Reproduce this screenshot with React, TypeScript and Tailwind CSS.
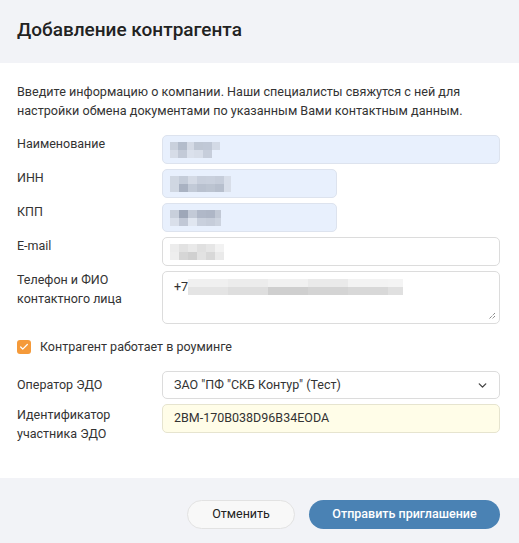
import { ChevronDown, Check } from "lucide-react";

const Blur = ({ blocks }: { blocks: { w: number; c: string }[][] }) => (
  <div className="flex flex-col blur-[0.6px]">
    {blocks.map((row, i) => (
      <div key={i} className="flex h-[8px]">
        {row.map((b, j) => (
          <div key={j} style={{ width: b.w, backgroundColor: b.c }} />
        ))}
      </div>
    ))}
  </div>
);

const Row = ({ label, children }: { label: React.ReactNode; children: React.ReactNode }) => (
  <div className="flex mb-[5px]">
    <div className="w-[145px] shrink-0 -mt-[1px] text-[12.5px] leading-[19px] text-[#333]">{label}</div>
    <div className="flex-1">{children}</div>
  </div>
);

const App = () => {
  return (
    <div
      className="w-[519px] h-[543px] flex flex-col bg-white text-[#333]"
      style={{ fontFamily: 'Roboto, "Noto Sans", sans-serif' }}
    >
      <div className="h-[63px] shrink-0 bg-[#f2f3f7] px-[17px] flex items-center">
        <h1 className="text-[19px] font-medium text-[#222] -mt-[2px]">Добавление контрагента</h1>
      </div>

      <div className="flex-1 pl-[17px] pr-[19px] pt-[19px]">
        <p className="text-[12.6px] leading-[19px] text-[#333] mb-[15px]">
          Введите информацию о компании. Наши специалисты свяжутся с ней для настройки обмена
          документами по указанным Вами контактным данным.
        </p>

        <Row label="Наименование">
          <div className="h-[29px] rounded-[5px] border border-[#dde3ee] bg-[#e8f0fd] px-[7px] flex items-center">
            <Blur
              blocks={[
                [
                  { w: 8, c: "#c9d0dc" },
                  { w: 9, c: "#b3bccb" },
                  { w: 7, c: "#d4dae5" },
                  { w: 9, c: "#bfc7d4" },
                  { w: 9, c: "#c0c8d6" },
                  { w: 8, c: "#d3dae6" },
                ],
                [
                  { w: 8, c: "#d6dce7" },
                  { w: 9, c: "#c3cad7" },
                  { w: 7, c: "#dbe1ec" },
                  { w: 9, c: "#d8dee9" },
                  { w: 9, c: "#c7cedb" },
                ],
              ]}
            />
          </div>
        </Row>

        <Row label="ИНН">
          <div className="w-[175px] h-[29px] rounded-[5px] border border-[#dde3ee] bg-[#e8f0fd] px-[7px] flex items-center">
            <Blur
              blocks={[
                [
                  { w: 9, c: "#d0d7e2" },
                  { w: 9, c: "#c4ccd9" },
                  { w: 9, c: "#d4dae5" },
                  { w: 9, c: "#c8cfdc" },
                  { w: 9, c: "#c9d0dd" },
                  { w: 9, c: "#c6cdda" },
                  { w: 7, c: "#d8dee9" },
                ],
                [
                  { w: 9, c: "#d0d7e2" },
                  { w: 9, c: "#a9b2c2" },
                  { w: 9, c: "#c2cad7" },
                  { w: 9, c: "#b9c1cf" },
                  { w: 9, c: "#bcc4d1" },
                  { w: 9, c: "#b7bfcd" },
                  { w: 7, c: "#d8dee9" },
                ],
              ]}
            />
          </div>
        </Row>

        <Row label="КПП">
          <div className="w-[175px] h-[29px] rounded-[5px] border border-[#dde3ee] bg-[#e8f0fd] px-[7px] flex items-center">
            <Blur
              blocks={[
                [
                  { w: 9, c: "#c8cfdb" },
                  { w: 9, c: "#9ea7b8" },
                  { w: 9, c: "#c3cad7" },
                  { w: 9, c: "#b0b8c8" },
                  { w: 9, c: "#aeb6c6" },
                  { w: 6, c: "#c1c8d5" },
                ],
                [
                  { w: 9, c: "#d9dfea" },
                  { w: 9, c: "#c1c8d6" },
                  { w: 9, c: "#e0e6f0" },
                  { w: 9, c: "#c9d0dd" },
                  { w: 9, c: "#c6cdda" },
                  { w: 6, c: "#ccd3df" },
                ],
              ]}
            />
          </div>
        </Row>

        <Row label="E-mail">
          <div className="h-[29px] rounded-[5px] border border-[#dcdcdc] bg-white px-[7px] flex items-center">
            <Blur
              blocks={[
                [
                  { w: 9, c: "#ececec" },
                  { w: 9, c: "#e2e2e2" },
                  { w: 9, c: "#e9e9e9" },
                  { w: 9, c: "#e0e0e0" },
                  { w: 9, c: "#e6e6e6" },
                  { w: 9, c: "#f2f2f2" },
                ],
                [
                  { w: 9, c: "#eeeeee" },
                  { w: 9, c: "#d6d6d6" },
                  { w: 9, c: "#d0d0d0" },
                  { w: 9, c: "#e2e2e2" },
                  { w: 9, c: "#d8d8d8" },
                  { w: 9, c: "#eaeaea" },
                ],
              ]}
            />
          </div>
        </Row>

        <Row label={<>Телефон и ФИО<br />контактного лица</>}>
          <div className="relative h-[53px] rounded-[5px] border border-[#dcdcdc] bg-white px-[11px] pt-[4px] flex items-start">
            <span className="text-[12.5px] leading-[19px] text-[#333] mt-[1px]">+7</span>
            <div className="mt-[3px]">
              <Blur
                blocks={[
                  [
                    { w: 40, c: "#f0f0f0" },
                    { w: 40, c: "#ececec" },
                    { w: 40, c: "#f1f1f1" },
                    { w: 40, c: "#eaeaea" },
                    { w: 40, c: "#f3f3f3" },
                    { w: 15, c: "#f4f4f4" },
                  ],
                  [
                    { w: 40, c: "#e4e4e4" },
                    { w: 40, c: "#dedede" },
                    { w: 40, c: "#cfcfcf" },
                    { w: 40, c: "#d4d4d4" },
                    { w: 40, c: "#d8d8d8" },
                    { w: 15, c: "#e0e0e0" },
                  ],
                ]}
              />
            </div>
            <svg className="absolute right-[3px] bottom-[3px]" width="9" height="9" viewBox="0 0 9 9">
              <path d="M8 2 L2 8 M8 5 L5 8" stroke="#555" strokeWidth="1" strokeDasharray="1 1" />
            </svg>
          </div>
        </Row>

        <label className="flex items-center gap-[9px] mt-[13px] mb-[15px]">
          <span className="w-[14px] h-[14px] rounded-[3px] bg-[#f59a3a] flex items-center justify-center">
            <Check size={10} strokeWidth={3} color="#fff" />
          </span>
          <span className="text-[12.5px] leading-[19px] text-[#333]">Контрагент работает в роуминге</span>
        </label>

        <Row label={<div className="pt-[5px]">Оператор ЭДО</div>}>
          <div className="h-[28px] rounded-[5px] border border-[#dcdcdc] bg-white pl-[11px] pr-[10px] flex items-center justify-between">
            <span className="text-[12.5px] text-[#333]">ЗАО "ПФ "СКБ Контур" (Тест)</span>
            <ChevronDown size={13} strokeWidth={2.5} color="#444" />
          </div>
        </Row>

        <Row label={<div className="pt-[2px]">Идентификатор<br />участника ЭДО</div>}>
          <div className="h-[29px] rounded-[5px] border border-[#e6e4cf] bg-[#fffde8] px-[11px] flex items-center">
            <span className="text-[12.5px] text-[#333]">2BM-170B038D96B34EODA</span>
          </div>
        </Row>
      </div>

      <div className="h-[65px] shrink-0 bg-[#f2f3f7] pr-[19px] pt-[22px] flex items-start justify-end gap-[14px]">
        <button className="h-[29px] w-[108px] rounded-full border border-[#e2e2e2] bg-[#f8f8f8] text-[12.5px] text-[#222]">
          Отменить
        </button>
        <button className="h-[29px] w-[191px] rounded-full bg-[#4a82b4] text-[12.5px] font-medium text-white">
          Отправить приглашение
        </button>
      </div>
    </div>
  );
};

export default App;
